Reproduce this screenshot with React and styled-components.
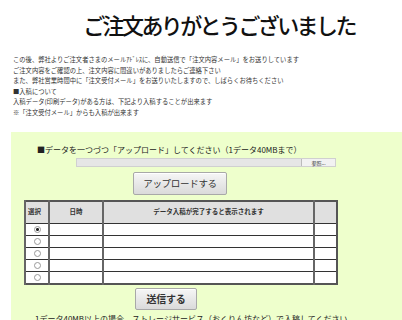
import React from "react";
import styled, { createGlobalStyle } from "styled-components";

const GlobalStyle = createGlobalStyle`
  html, body {
    margin: 0;
    padding: 0;
    background: #ffffff;
    overflow: hidden;
  }
  body {
    font-family: "Noto Sans CJK JP", "Noto Sans", sans-serif;
    color: #222;
  }
`;

const Page = styled.div`
  width: 402px;
  height: 320px;
  overflow: hidden;
`;

const Title = styled.h1`
  margin: 10px 0 0 0;
  padding-left: 36px;
  font-size: 22px;
  font-weight: 500;
  line-height: 28px;
  letter-spacing: -2.6px;
  text-align: center;
  color: #111;
`;

const Intro = styled.div`
  margin-top: 17px;
  padding-left: 13px;
  font-size: 6.3px;
  line-height: 10.6px;
  color: #333;
  white-space: nowrap;
`;

const Line = styled.div``;

const Panel = styled.section`
  margin: 13px 0 0 11px;
  width: 430px;
  padding-top: 12px;
  background: #eeffcc;
  display: flex;
  flex-direction: column;
  align-items: flex-start;
`;

const Heading = styled.div`
  margin-left: 26px;
  font-size: 8px;
  line-height: 12px;
  color: #222;
  white-space: nowrap;
`;

const FileBar = styled.div`
  margin: 2px 0 0 65px;
  width: 260px;
  height: 9px;
  display: flex;
  background: #e6e6e6;
  border: 1px solid #d0d0d0;
  box-sizing: border-box;
`;

const FileField = styled.div`
  flex: 1;
`;

const BrowseButton = styled.div`
  width: 34px;
  height: 100%;
  box-sizing: border-box;
  border-left: 1px solid #bbb;
  background: #f2f2f2;
  font-size: 5px;
  line-height: 7px;
  text-align: center;
  color: #333;
`;

const Button = styled.button`
  margin: ${(p) => p.$top}px 0 0 ${(p) => p.$left}px;
  width: ${(p) => p.$width}px;
  height: ${(p) => p.$height}px;
  padding: 0;
  border: 1px solid #a8a8a8;
  border-radius: 2px;
  background: linear-gradient(#f6f6f6, #dadada);
  box-shadow: inset 0 1px 0 #fff;
  font-family: "Noto Sans CJK JP", sans-serif;
  font-size: ${(p) => p.$size}px;
  font-weight: ${(p) => (p.$bold ? 700 : 400)};
  letter-spacing: -0.3px;
  color: #333;
`;

const Table = styled.table`
  margin: 5px 0 0 13px;
  width: 312px;
  border-collapse: collapse;
  border: 2px solid #555;
  background: #fff;
  table-layout: fixed;
`;

const HeadCell = styled.th`
  height: 23px;
  padding: 0;
  background: #e0e0e0;
  border-left: 2px solid #666;
  border-bottom: 1px solid #333;
  font-size: 6.5px;
  font-weight: 700;
  color: #333;
  text-align: ${(p) => (p.$left ? "left" : "center")};
  padding-left: ${(p) => (p.$left ? "2px" : "0")};
  vertical-align: top;
  padding-top: 4px;
  box-sizing: border-box;
`;

const Cell = styled.td`
  height: 12px;
  padding: 0;
  border-left: 2px solid #666;
  border-bottom: 1px solid #333;
  text-align: center;
  vertical-align: middle;
  line-height: 0;
  box-sizing: border-box;
`;

const Radio = styled.span`
  display: inline-block;
  width: 5px;
  height: 5px;
  border: 1px solid #999;
  border-radius: 50%;
  background: ${(p) => (p.$checked ? "radial-gradient(circle, #222 0 1.3px, #fff 1.6px)" : "#fff")};
`;

const Note = styled.div`
  margin: 3px 0 0 24px;
  font-size: 8px;
  line-height: 12px;
  color: #222;
  white-space: nowrap;
`;

const rows = [true, false, false, false, false];

export default function App() {
  return (
    <Page>
      <GlobalStyle />
      <Title>ご注文ありがとうございました</Title>
      <Intro>
        <Line>この後、弊社よりご注文者さまのメールｱﾄﾞﾚｽに、自動送信で「注文内容メール」をお送りしています</Line>
        <Line>ご注文内容をご確認の上、注文内容に間違いがありましたらご連絡下さい</Line>
        <Line>また、弊社営業時間中に「注文受付メール」をお送りいたしますので、しばらくお待ちください</Line>
        <Line>■入稿について</Line>
        <Line>入稿データ(印刷データ)がある方は、下記より入稿することが出来ます</Line>
        <Line>※「注文受付メール」からも入稿が出来ます</Line>
      </Intro>
      <Panel>
        <Heading>■データを一つづつ「アップロード」してください（1データ40MBまで）</Heading>
        <FileBar>
          <FileField />
          <BrowseButton>参照...</BrowseButton>
        </FileBar>
        <Button $top={5} $left={122} $width={94} $height={23} $size={9.5}>
          アップロードする
        </Button>
        <Table>
          <colgroup>
            <col style={{ width: 24 }} />
            <col style={{ width: 54 }} />
            <col style={{ width: 211 }} />
            <col style={{ width: 23 }} />
          </colgroup>
          <thead>
            <tr>
              <HeadCell $left>選択</HeadCell>
              <HeadCell>日時</HeadCell>
              <HeadCell>データ入稿が完了すると表示されます</HeadCell>
              <HeadCell />
            </tr>
          </thead>
          <tbody>
            {rows.map((checked, i) => (
              <tr key={i}>
                <Cell>
                  <Radio $checked={checked} />
                </Cell>
                <Cell />
                <Cell />
                <Cell />
              </tr>
            ))}
          </tbody>
        </Table>
        <Button $top={3} $left={124} $width={62} $height={22} $size={10} $bold>
          送信する
        </Button>
        <Note>1データ40MB以上の場合、ストレージサービス（おくりん坊など）で入稿してください</Note>
      </Panel>
    </Page>
  );
}
